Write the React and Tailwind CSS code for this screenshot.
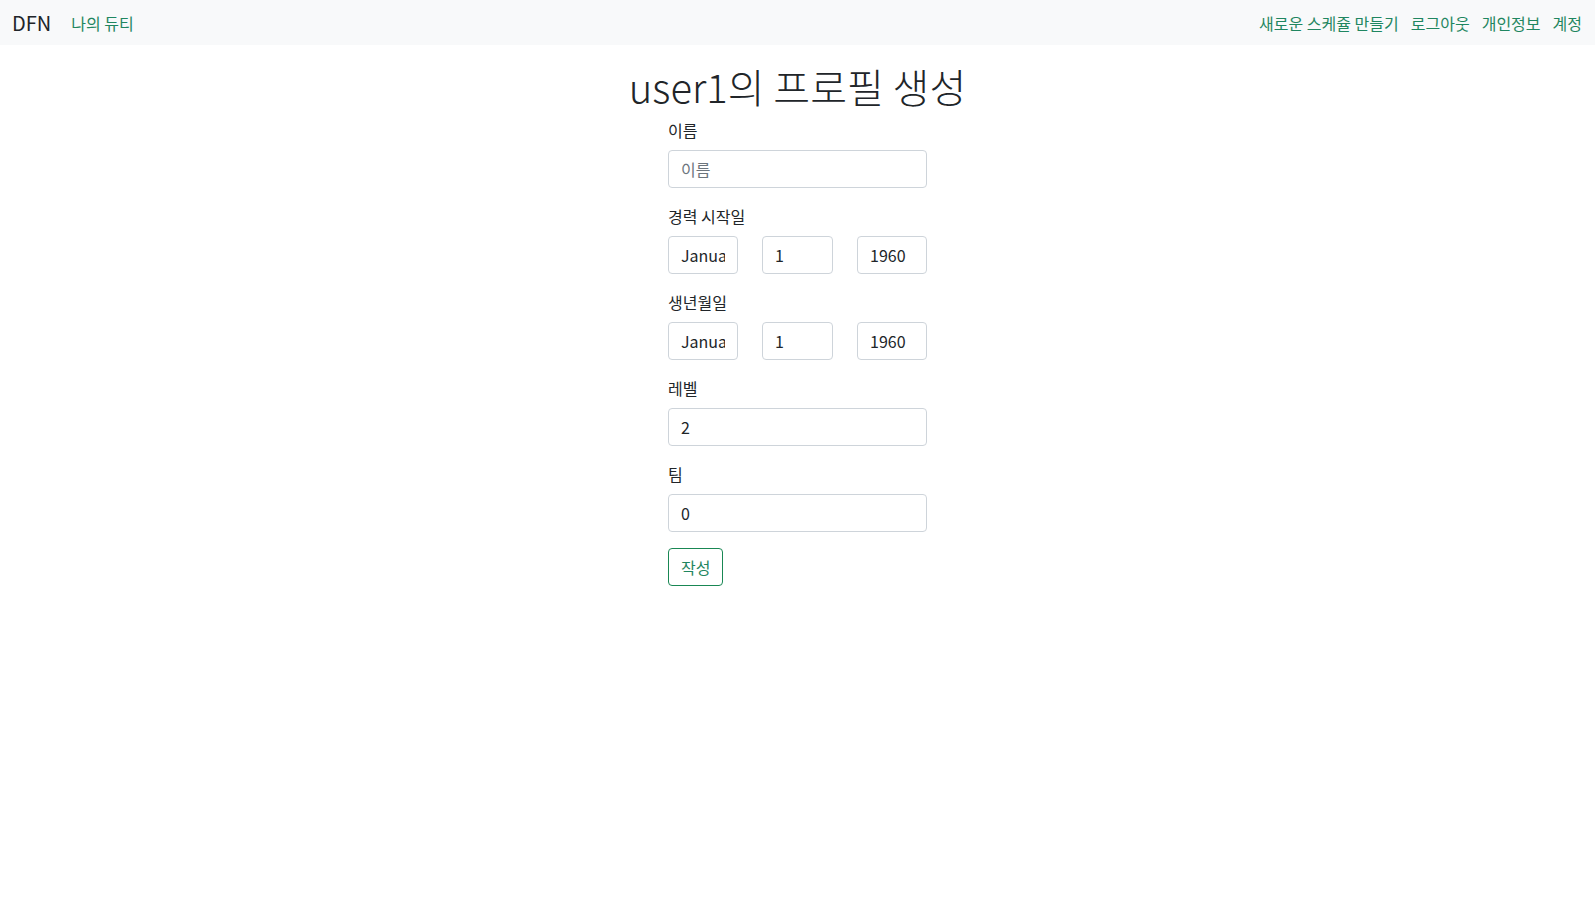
import React from "react";

const font = { fontFamily: '"Noto Sans CJK KR", "Noto Sans", sans-serif' };

function Field({ label, children }) {
  return (
    <div className="mb-4">
      <label className="block text-[16px] leading-6 text-[#212529] mb-2">{label}</label>
      {children}
    </div>
  );
}

function TextInput({ value, placeholder, className = "w-full" }) {
  return (
    <input
      readOnly
      value={value}
      placeholder={placeholder}
      className={`${className} h-[38px] px-3 border border-[#ced4da] rounded bg-white text-[16px] text-[#212529] placeholder:text-[#6c757d] outline-none`}
      style={font}
    />
  );
}

function DateRow() {
  return (
    <div className="flex justify-between">
      <TextInput value="January" className="w-[70px]" />
      <TextInput value="1" className="w-[71px]" />
      <TextInput value="1960" className="w-[70px]" />
    </div>
  );
}

export default function App() {
  return (
    <div className="min-h-[912px] bg-white text-[#212529]" style={font}>
      <nav className="h-[45px] bg-[#f8f9fa] flex items-center pl-[12px] pr-[13px]">
        <span className="text-[20px] text-[#212529] mr-[20px]">DFN</span>
        <span className="text-[16px] text-[#1f8660]">나의 듀티</span>
        <div className="ml-auto flex items-center gap-[12px] text-[16px] text-[#1f8660]">
          <span>새로운 스케쥴 만들기</span>
          <span>로그아웃</span>
          <span>개인정보</span>
          <span>계정</span>
        </div>
      </nav>
      <h1 className="mt-[17px] mb-2 text-center text-[40px] leading-[48px] font-light">
        user1의 프로필 생성
      </h1>
      <form className="w-[259px] mx-auto">
        <Field label="이름">
          <TextInput value="" placeholder="이름" />
        </Field>
        <Field label="경력 시작일">
          <DateRow />
        </Field>
        <Field label="생년월일">
          <DateRow />
        </Field>
        <Field label="레벨">
          <TextInput value="2" />
        </Field>
        <Field label="팀">
          <TextInput value="0" />
        </Field>
        <button
          type="button"
          className="h-[38px] px-3 border border-[#198754] rounded text-[16px] text-[#1f8660] bg-white"
          style={font}
        >
          작성
        </button>
      </form>
    </div>
  );
}
